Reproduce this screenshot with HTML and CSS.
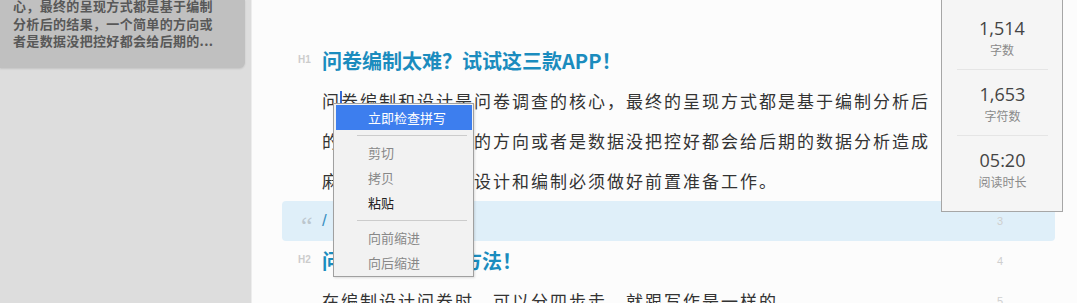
FILE: index.html
```html
<!DOCTYPE html>
<html lang="zh-CN">
<head>
<meta charset="utf-8">
<title>问卷编辑器</title>
<link rel="stylesheet" href="styles.css">
</head>
<body>
<div class="app">
  <aside class="sidebar">
    <div class="card">
      <p class="card-text">心，最终的呈现方式都是基于编制分析后的结果，一个简单的方向或者是数据没把控好都会给后期的...</p>
    </div>
  </aside>
  <main class="editor">
    <div class="doc">
      <div class="row">
        <span class="gutter tag">H1</span>
        <h1 class="heading">问卷编制太难？试试这三款APP！</h1>
        <span class="ln">1</span>
      </div>
      <div class="row">
        <span class="gutter"></span>
        <p class="para">问<span class="caret"></span>卷编制和设计是问卷调查的核心，最终的呈现方式都是基于编制分析后的结果，一个简单的方向或者是数据没把控好都会给后期的数据分析造成麻烦，所以问卷的设计和编制必须做好前置准备工作。</p>
        <span class="ln">2</span>
      </div>
      <div class="row quote">
        <span class="gutter qmark">“</span>
        <p class="para slash">/</p>
        <span class="ln">3</span>
      </div>
      <div class="row">
        <span class="gutter tag">H2</span>
        <h2 class="heading">问卷编制的常用方法！</h2>
        <span class="ln">4</span>
      </div>
      <div class="row">
        <span class="gutter"></span>
        <p class="para">在编制设计问卷时，可以分四步走，就跟写作是一样的。</p>
        <span class="ln">5</span>
      </div>
    </div>

    <div class="stats">
      <div class="stat">
        <div class="stat-num">1,514</div>
        <div class="stat-label">字数</div>
      </div>
      <div class="stat">
        <div class="stat-num">1,653</div>
        <div class="stat-label">字符数</div>
      </div>
      <div class="stat">
        <div class="stat-num">05:20</div>
        <div class="stat-label">阅读时长</div>
      </div>
    </div>

    <ul class="menu">
      <li class="menu-item active">立即检查拼写</li>
      <li class="menu-sep"></li>
      <li class="menu-item disabled">剪切</li>
      <li class="menu-item disabled">拷贝</li>
      <li class="menu-item">粘贴</li>
      <li class="menu-sep"></li>
      <li class="menu-item disabled">向前缩进</li>
      <li class="menu-item disabled">向后缩进</li>
    </ul>
  </main>
</div>
</body>
</html>
```

FILE: styles.css
```css
* {
  box-sizing: border-box;
}

html, body {
  margin: 0;
  padding: 0;
  width: 1077px;
  height: 303px;
  overflow: hidden;
  background: #fcfcfc;
  font-family: "Noto Sans CJK SC", "Noto Sans", sans-serif;
}

.app {
  display: flex;
  height: 303px;
}

/* ---------- sidebar ---------- */
.sidebar {
  width: 252px;
  flex: none;
  background: #dddddd;
  border-right: 1px solid #ededed;
}

.card {
  width: 245px;
  background: #c0c0c0;
  border-bottom-right-radius: 6px;
  box-shadow: 0 1px 2px rgba(0, 0, 0, 0.12);
  padding: 0 20px 18px 13px;
  overflow: hidden;
}

.card-text {
  margin: -3px 0 0;
  width: 205px;
  font-size: 13px;
  line-height: 17.5px;
  letter-spacing: 0.33px;
  color: #585858;
  font-weight: bold;
}

/* ---------- editor ---------- */
.editor {
  position: relative;
  flex: 1;
  padding: 41px 22px 0 30px;
}

.doc {
  display: flex;
  flex-direction: column;
}

.row {
  display: grid;
  grid-template-columns: 40px 620px 1fr;
  line-height: 40px;
  min-height: 40px;
}

.row.quote {
  background: #dfeff9;
  border-radius: 4px;
}

.gutter {
  padding-left: 16px;
}

.tag {
  font-family: "Liberation Sans", "Noto Sans", sans-serif;
  font-size: 10px;
  font-weight: bold;
  color: #cccccc;
  line-height: 38px;
}

.qmark {
  height: 40px;
  overflow: hidden;
  padding-left: 19px;
  padding-top: 5px;
  font-family: "Liberation Serif", serif;
  font-size: 26px;
  color: #bcc6cd;
  line-height: 40px;
}

.heading {
  margin: 0;
  font-size: 20px;
  font-weight: bold;
  color: #1b8cbe;
  line-height: 40px;
}

.para {
  margin: 0;
  font-size: 17px;
  letter-spacing: 2px;
  color: #333333;
  line-height: 40px;
}

.slash {
  color: #3b8fc2;
  font-family: "Liberation Sans", sans-serif;
  font-size: 17px;
}

.caret {
  display: inline-block;
  width: 0;
  height: 20px;
  border-left: 2px solid #3569d8;
  margin-left: -1px;
  margin-right: -1px;
  vertical-align: -3px;
}

.ln {
  text-align: center;
  padding-left: 3px;
  font-family: "Liberation Sans", sans-serif;
  font-size: 11px;
  color: #cfcfcf;
  line-height: 40px;
}

/* ---------- stats panel ---------- */
.stats {
  position: absolute;
  left: 689px;
  top: -1px;
  width: 122px;
  background: #f5f5f5;
  border: 1px solid #a6a6a6;
  padding: 4px 0 10px;
}

.stat {
  padding: 12px 0 9px;
  text-align: center;
}

.stat + .stat {
  border-top: 1px solid #e5e5e5;
  margin: 0 14px 0 15px;
}

.stat-num {
  font-family: "Open Sans", "Noto Sans", sans-serif;
  font-size: 18px;
  line-height: 24px;
  color: #444444;
}

.stat-label {
  font-size: 12px;
  line-height: 20px;
  color: #8a8a8a;
}

/* ---------- context menu ---------- */
.menu {
  position: absolute;
  left: 81px;
  top: 103px;
  width: 141px;
  margin: 0;
  padding: 1px 1px 1px 2px;
  list-style: none;
  background: #f2f2f2;
  border: 1px solid #a0a0a0;
  box-shadow: 1px 1px 2px rgba(0, 0, 0, 0.12);
}

.menu-item {
  height: 25px;
  line-height: 25px;
  padding-left: 32px;
  font-size: 13px;
  color: #222222;
}

.menu-item.active {
  background: #3d7eee;
  color: #ffffff;
}

.menu-item.disabled {
  color: #888888;
}

.menu-sep {
  height: 10px;
  display: flex;
  align-items: center;
  padding: 0 5px 0 21px;
}

.menu-sep::before {
  content: "";
  flex: 1;
  height: 1px;
  background: #cccccc;
}
```
